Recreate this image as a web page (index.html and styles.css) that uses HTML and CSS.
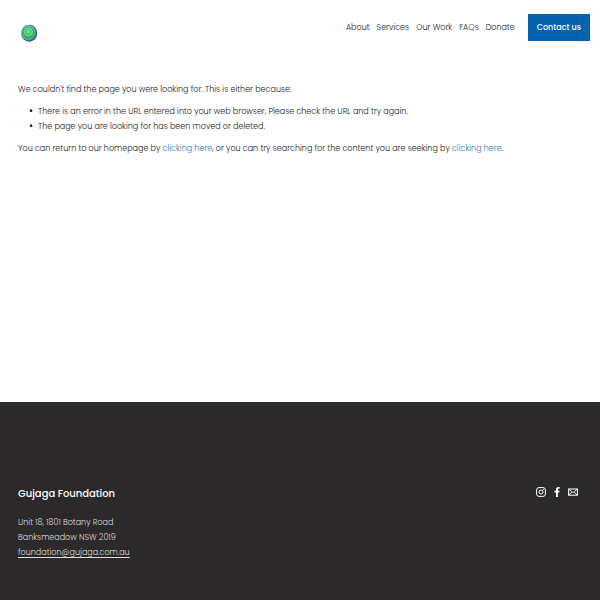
FILE: index.html
```html
<!DOCTYPE html>
<html lang="en">
<head>
    <meta charset="UTF-8">
    <meta name="viewport" content="width=device-width, initial-scale=1.0">
    <title>Gujaga Foundation</title>
    <link rel="stylesheet" href="styles.css">
</head>
<body>

    <header class="header">
        <a class="logo" href="/" aria-label="Gujaga Foundation">
            <svg width="18" height="18" viewBox="0 0 18 18">
                <ellipse cx="9.2" cy="9.2" rx="8" ry="8.5" fill="#2f5fb0"/>
                <ellipse cx="8.4" cy="8.4" rx="7.2" ry="7.4" fill="#7fb0cf"/>
                <circle cx="8.6" cy="8.6" r="6.4" fill="#2fb450"/>
                <circle cx="8.4" cy="7.8" r="4" fill="#45c060" stroke="#8fdcc8" stroke-width="0.9"/>
                <circle cx="8.4" cy="7.4" r="2.2" fill="#6fd6a8"/>
            </svg>
        </a>
        <nav class="nav">
            <a href="/about">About</a>
            <a href="/services">Services</a>
            <a href="/our-work">Our Work</a>
            <a href="/faqs">FAQs</a>
            <a href="/donate">Donate</a>
        </nav>
        <a class="contact-btn" href="/contact">Contact us</a>
    </header>

    <main class="content">
        <p>We couldn't find the page you were looking for. This is either because:</p>
        <ul>
            <li>There is an error in the URL entered into your web browser. Please check the URL and try again.</li>
            <li>The page you are looking for has been moved or deleted.</li>
        </ul>
        <p>You can return to our homepage by <a href="/">clicking here</a>, or you can try searching for the content you are seeking by <a href="/search">clicking here</a>.</p>
    </main>

    <footer class="footer">
        <div class="address">
            <h4>Gujaga Foundation</h4>
            <p>Unit 18, 1801 Botany Road<br>Banksmeadow NSW 2019<br><a href="mailto:foundation@gujaga.com.au">foundation@gujaga.com.au</a></p>
        </div>
        <div class="social">
            <a href="#" aria-label="Instagram">
                <svg width="10" height="10" viewBox="0 0 10 10" fill="none" stroke="#fff">
                    <rect x="0.6" y="0.6" width="8.8" height="8.8" rx="2.4"/>
                    <circle cx="5" cy="5" r="2"/>
                    <circle cx="7.5" cy="2.5" r="0.6" fill="#fff" stroke="none"/>
                </svg>
            </a>
            <a href="#" aria-label="Facebook">
                <svg width="10" height="10" viewBox="0 0 10 10" fill="#fff">
                    <path d="M4 10V5.6H2.5V3.8H4V2.5C4 .9 4.9 0 6.3 0h1.3v1.7h-.9c-.6 0-.8.3-.8.8v1.3h1.7l-.3 1.8H5.9V10z"/>
                </svg>
            </a>
            <a href="mailto:foundation@gujaga.com.au" aria-label="Email">
                <svg width="10" height="10" viewBox="0 0 10 10" fill="none" stroke="#fff">
                    <rect x="0.6" y="2" width="8.8" height="6.2"/>
                    <path d="M1 2.4l4 3.2 4-3.2M1 8l2.7-3M9 8L6.3 5" stroke-width="0.9"/>
                </svg>
            </a>
        </div>
    </footer>

</body>
</html>
```
FILE: styles.css
```css
* {
    box-sizing: border-box;
}
body {
    margin: 0;
    min-height: 100vh;
    display: flex;
    flex-direction: column;
    font-family: Poppins, Inter, "Liberation Sans", sans-serif;
    font-size: 8px;
    font-weight: 300;
    line-height: 15px;
    color: #222;
    background-color: #fff;
}
.header {
    display: flex;
    align-items: flex-start;
    padding: 14px 10px 14px 20px;
}
.logo {
    margin-right: auto;
    padding-top: 10px;
    line-height: 0;
}
.nav {
    display: flex;
    gap: 7px;
    padding: 6px 0;
}
.nav a {
    color: #222;
    text-decoration: none;
}
.contact-btn {
    margin-left: 13px;
    padding: 6px 9px;
    background-color: #0563af;
    color: #fff;
    font-weight: 500;
    text-decoration: none;
}
.content {
    flex: 1;
    padding: 26px 18px;
}
.content p,
.content ul {
    margin: 0 0 7px;
}
.content ul {
    padding-left: 20px;
}
.content li::marker {
    content: "•\00a0\00a0\00a0";
    font-weight: 700;
    color: #000;
}
.content a {
    color: #2a7ab5;
    text-decoration: none;
}
.footer {
    display: flex;
    justify-content: space-between;
    padding: 84px 22px 40px 18px;
    background-color: #2b292a;
    color: #ddd;
}
.address h4 {
    margin: 0 0 14px;
    font-size: 10px;
    font-weight: 500;
    color: #fff;
}
.address p {
    margin: 0;
}
.address a {
    color: #ddd;
    text-underline-offset: 2px;
}
.social {
    display: flex;
    gap: 6px;
    padding-top: 1px;
}
```
